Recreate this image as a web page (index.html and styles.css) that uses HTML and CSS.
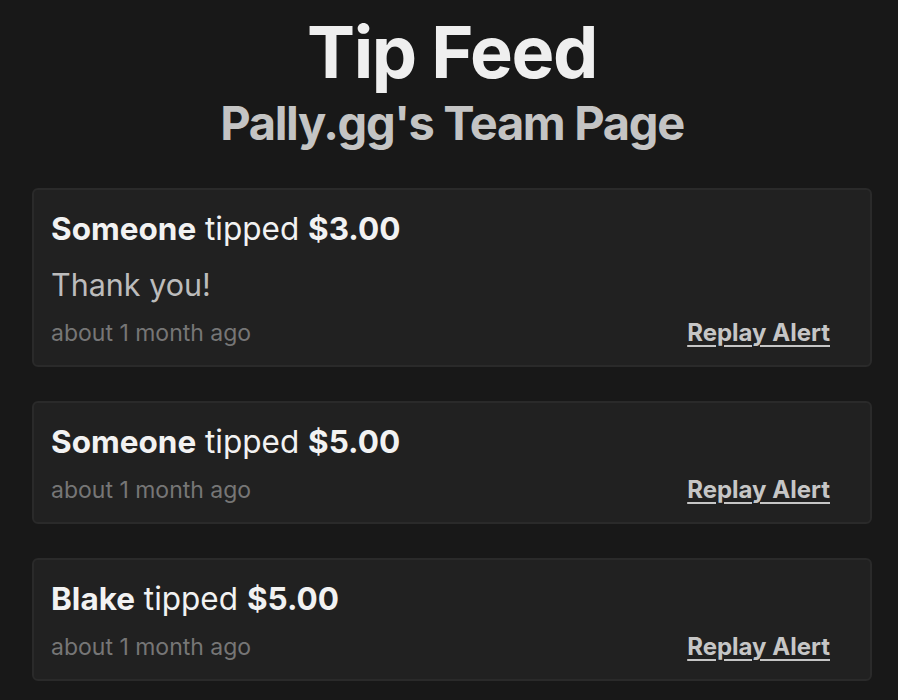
FILE: index.html
```html
<!DOCTYPE html>
<html lang="en">
<head>
  <meta charset="UTF-8" />
  <meta name="viewport" content="width=device-width, initial-scale=1.0"/>
  <title>Tip Feed</title>
  <link rel="stylesheet" href="styles.css">
</head>
<body>

  <header class="page-header">
    <h1 class="title">Tip Feed</h1>
    <h2 class="subtitle">Pally.gg's Team Page</h2>
  </header>

  <div class="feed">
    <div class="tip">
      <div class="tip-head"><b>Someone</b> tipped <b>$3.00</b></div>
      <div class="tip-message">Thank you!</div>
      <div class="tip-foot">
        <span class="tip-time">about 1 month ago</span>
        <a class="replay" href="#">Replay Alert</a>
      </div>
    </div>

    <div class="tip">
      <div class="tip-head"><b>Someone</b> tipped <b>$5.00</b></div>
      <div class="tip-foot">
        <span class="tip-time">about 1 month ago</span>
        <a class="replay" href="#">Replay Alert</a>
      </div>
    </div>

    <div class="tip">
      <div class="tip-head"><b>Blake</b> tipped <b>$5.00</b></div>
      <div class="tip-foot">
        <span class="tip-time">about 1 month ago</span>
        <a class="replay" href="#">Replay Alert</a>
      </div>
    </div>
  </div>

</body>
</html>
```

FILE: styles.css
```css
  body {
    margin: 0;
    font-family: Inter, "Noto Sans", sans-serif;
    background-color: #181818;
    color: #f0f0f0;
  }
  .page-header {
    text-align: center;
    padding: 12px 0 0 6px;
  }
  .title {
    margin: 0;
    font-size: 72px;
    font-weight: 700;
    line-height: 80px;
    letter-spacing: -0.02em;
    color: #efefef;
  }
  .subtitle {
    margin: 3px 0 0;
    font-size: 47px;
    font-weight: 700;
    line-height: 56px;
    letter-spacing: -0.028em;
    color: #c4c4c4;
  }
  .feed {
    display: flex;
    flex-direction: column;
    gap: 34px;
    margin: 37px 26px 0 32px;
  }
  .tip {
    background: #212121;
    border: 2px solid #2a2a2a;
    border-radius: 6px;
    padding: 17px 40px 18px 17px;
  }
  .tip-head {
    font-size: 31.5px;
    line-height: 44px;
    color: #f2f2f2;
  }
  .tip-head b {
    font-weight: 700;
  }
  .tip-message {
    margin-top: 12px;
    font-size: 30.5px;
    line-height: 44px;
    color: #bcbcbc;
  }
  .tip-foot {
    display: flex;
    justify-content: space-between;
    align-items: baseline;
    margin-top: 12px;
    line-height: 28px;
  }
  .tip-time {
    font-size: 23px;
    color: #767676;
  }
  .replay {
    font-size: 24px;
    font-weight: 700;
    color: #c6c6c6;
    text-decoration: underline;
    text-underline-offset: 4px;
    text-decoration-thickness: 2px;
  }
```
